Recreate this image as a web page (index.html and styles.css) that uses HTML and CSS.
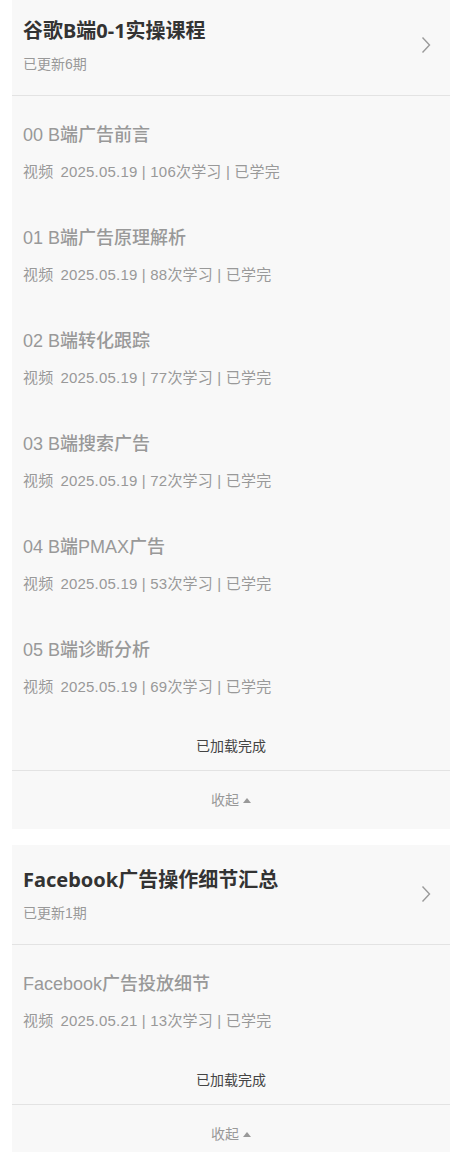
FILE: index.html
```html
<!DOCTYPE html>
<html lang="zh-CN">
<head>
  <meta charset="UTF-8" />
  <meta name="viewport" content="width=device-width, initial-scale=1.0"/>
  <title>课程列表</title>
  <link rel="stylesheet" href="styles.css">
</head>
<body>

  <div class="page">

    <div class="course">
      <div class="course-head">
        <div class="head-text">
          <h2>谷歌B端0-1实操课程</h2>
          <p class="updated">已更新6期</p>
        </div>
        <svg class="arrow" width="10" height="18" viewBox="0 0 10 18">
          <path d="M1.5 1.5 L8.5 9 L1.5 16.5" fill="none" stroke="#9a9a9a" stroke-width="1.4"/>
        </svg>
      </div>

      <div class="lessons">
        <div class="lesson">
          <div class="lesson-title">00 B端广告前言</div>
          <div class="lesson-meta"><span class="kind">视频</span>2025.05.19 | 106次学习 | 已学完</div>
        </div>
        <div class="lesson">
          <div class="lesson-title">01 B端广告原理解析</div>
          <div class="lesson-meta"><span class="kind">视频</span>2025.05.19 | 88次学习 | 已学完</div>
        </div>
        <div class="lesson">
          <div class="lesson-title">02 B端转化跟踪</div>
          <div class="lesson-meta"><span class="kind">视频</span>2025.05.19 | 77次学习 | 已学完</div>
        </div>
        <div class="lesson">
          <div class="lesson-title">03 B端搜索广告</div>
          <div class="lesson-meta"><span class="kind">视频</span>2025.05.19 | 72次学习 | 已学完</div>
        </div>
        <div class="lesson">
          <div class="lesson-title">04 B端PMAX广告</div>
          <div class="lesson-meta"><span class="kind">视频</span>2025.05.19 | 53次学习 | 已学完</div>
        </div>
        <div class="lesson">
          <div class="lesson-title">05 B端诊断分析</div>
          <div class="lesson-meta"><span class="kind">视频</span>2025.05.19 | 69次学习 | 已学完</div>
        </div>
      </div>

      <div class="loaded">已加载完成</div>
      <div class="collapse">收起<span class="tri"></span></div>
    </div>

    <div class="course">
      <div class="course-head">
        <div class="head-text">
          <h2>Facebook广告操作细节汇总</h2>
          <p class="updated">已更新1期</p>
        </div>
        <svg class="arrow" width="10" height="18" viewBox="0 0 10 18">
          <path d="M1.5 1.5 L8.5 9 L1.5 16.5" fill="none" stroke="#9a9a9a" stroke-width="1.4"/>
        </svg>
      </div>

      <div class="lessons">
        <div class="lesson">
          <div class="lesson-title">Facebook广告投放细节</div>
          <div class="lesson-meta"><span class="kind">视频</span>2025.05.21 | 13次学习 | 已学完</div>
        </div>
      </div>

      <div class="loaded">已加载完成</div>
      <div class="collapse">收起<span class="tri"></span></div>
    </div>

  </div>

</body>
</html>
```

FILE: styles.css
```css
body {
  margin: 0;
  background: #fff;
  font-family: "Liberation Sans", "Noto Sans CJK SC", sans-serif;
  color: #333;
}
.page {
  margin-top: -4px;
  padding: 0 7px 0 12px;
}
.course {
  background: #f8f8f8;
  margin-bottom: 16px;
}
.course-head {
  display: flex;
  justify-content: space-between;
  align-items: center;
  padding: 21px 19px 22px 11px;
  border-bottom: 1px solid #e3e3e3;
}
.course-head h2 {
  margin: 0;
  font-family: "Noto Sans", "Noto Sans CJK SC", sans-serif;
  font-size: 20px;
  line-height: 28px;
  font-weight: bold;
  color: #333;
}
.updated {
  margin: 10px 0 0;
  font-size: 14px;
  line-height: 18px;
  color: #999;
}
.arrow {
  display: block;
}
.lesson {
  padding: 27px 11px 17px;
}
.lesson-title {
  font-size: 18px;
  line-height: 24px;
  font-weight: 500;
  color: #999;
}
.lesson-meta {
  margin-top: 15px;
  font-size: 15px;
  line-height: 20px;
  letter-spacing: 0.2px;
  color: #999;
}
.kind {
  margin-right: 7px;
}
.loaded {
  padding: 22px 0 14px;
  text-align: center;
  font-size: 14px;
  line-height: 20px;
  color: #444;
  border-bottom: 1px solid #e3e3e3;
}
.collapse {
  display: flex;
  justify-content: center;
  align-items: center;
  padding: 19px 0;
  font-size: 14px;
  line-height: 20px;
  color: #999;
}
.tri {
  width: 0;
  height: 0;
  margin-left: 4px;
  border-left: 4px solid transparent;
  border-right: 4px solid transparent;
  border-bottom: 5px solid #999;
}
```
